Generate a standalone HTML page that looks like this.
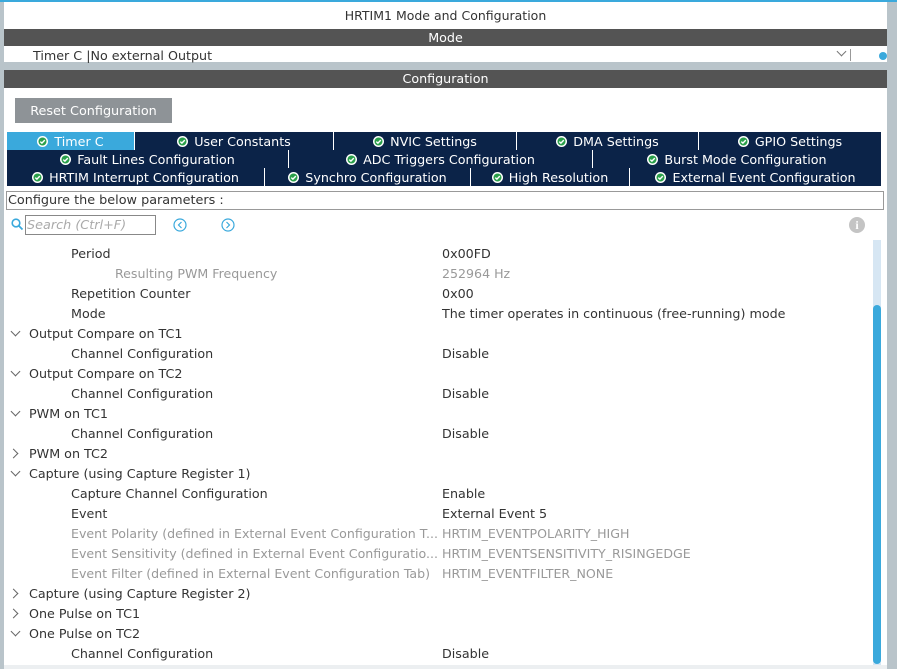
<!DOCTYPE html>
<html><head><meta charset="utf-8"><style>
*{margin:0;padding:0;box-sizing:border-box}
body{width:897px;height:669px;overflow:hidden;background:#b9c4ca;font-family:"DejaVu Sans","Liberation Sans",sans-serif;font-size:12.7px;color:#333;position:relative}
.a{position:absolute;white-space:nowrap}
.hdr{background:#545454;color:#fff;text-align:center;line-height:17px;font-size:12.7px}
.tab{position:absolute;height:18px;background:#0b2348;color:#fff;text-align:center;line-height:20px;border-right:1px solid #fff;font-size:12.7px}
.tab.sel{background:#3aa9dc}
.ck{display:inline-block;width:11px;height:11px;vertical-align:-1px;margin-right:6px}
.r{position:absolute;white-space:nowrap;line-height:20px;height:20px}
.g{color:#999;font-size:12.6px}
.arr{position:absolute;left:12px;width:7px;height:7px;border-right:1px solid #666;border-bottom:1px solid #666}
</style></head><body>
<svg width="0" height="0" style="position:absolute"><defs><symbol id="c" viewBox="0 0 11 11"><circle cx="5.5" cy="5.5" r="5.5" fill="#fff"/><circle cx="5.5" cy="5.5" r="4" fill="#2aa04a"/><path d="M3.3 5.6 L4.9 7.1 L7.8 4.1" fill="none" stroke="#fff" stroke-width="1.4"/></symbol></defs></svg>
<div class="a" style="left:0;top:0;width:897px;height:2px;background:#3aa9dc"></div>
<div class="a" style="left:4px;top:2px;width:883px;height:60px;background:#fff"></div>
<div class="a" style="left:4px;top:7px;width:883px;text-align:center;line-height:17px;font-size:12.5px">HRTIM1 Mode and Configuration</div>
<div class="a hdr" style="left:4px;top:29px;width:883px">Mode</div>
<div class="a" style="left:33px;top:47px;line-height:17px">Timer C |No external Output</div>
<div class="a" style="left:838px;top:48px;width:7px;height:7px;border-right:1px solid #777;border-bottom:1px solid #777;transform:rotate(45deg)"></div>
<div class="a" style="left:850px;top:49px;width:1px;height:12px;background:#999"></div>
<div class="a" style="left:879px;top:52px;width:8px;height:8px;border-radius:50%;background:#3aa9dc"></div>
<div class="a" style="left:4px;top:70px;width:883px;height:599px;background:#fff"></div>
<div class="a hdr" style="left:4px;top:70px;width:883px;top:70px;line-height:18px">Configuration</div>
<div class="a" style="left:15px;top:98px;width:157px;height:25px;background:#8e9397;color:#fff;text-align:center;line-height:27px;font-size:12.8px">Reset Configuration</div>

<div class="tab sel" style="left:7px;top:132px;width:128px"><svg class="ck"><use href="#c"/></svg>Timer C</div>
<div class="tab" style="left:135px;top:132px;width:199px"><svg class="ck"><use href="#c"/></svg>User Constants</div>
<div class="tab" style="left:334px;top:132px;width:183px"><svg class="ck"><use href="#c"/></svg>NVIC Settings</div>
<div class="tab" style="left:517px;top:132px;width:182px"><svg class="ck"><use href="#c"/></svg>DMA Settings</div>
<div class="tab" style="left:699px;top:132px;width:182px;border-right:0"><svg class="ck"><use href="#c"/></svg>GPIO Settings</div>
<div class="tab" style="left:7px;top:150px;width:282px"><svg class="ck"><use href="#c"/></svg>Fault Lines Configuration</div>
<div class="tab" style="left:289px;top:150px;width:304px"><svg class="ck"><use href="#c"/></svg>ADC Triggers Configuration</div>
<div class="tab" style="left:593px;top:150px;width:288px;border-right:0"><svg class="ck"><use href="#c"/></svg>Burst Mode Configuration</div>
<div class="tab" style="left:7px;top:168px;width:258px"><svg class="ck"><use href="#c"/></svg>HRTIM Interrupt Configuration</div>
<div class="tab" style="left:265px;top:168px;width:206px"><svg class="ck"><use href="#c"/></svg>Synchro Configuration</div>
<div class="tab" style="left:471px;top:168px;width:159px"><svg class="ck"><use href="#c"/></svg>High Resolution</div>
<div class="tab" style="left:630px;top:168px;width:251px;border-right:0"><svg class="ck"><use href="#c"/></svg>External Event Configuration</div>

<div class="a" style="left:6px;top:191px;width:878px;height:19px;border:1px solid #999;line-height:18px;padding-left:1px;font-size:12.8px">Configure the below parameters :</div>
<svg class="a" style="left:11px;top:218px" width="13" height="13"><circle cx="5" cy="5" r="3.8" fill="none" stroke="#3aa9dc" stroke-width="1.6"/><line x1="8" y1="8" x2="11.5" y2="11.5" stroke="#3aa9dc" stroke-width="1.8"/></svg>
<div class="a" style="left:25px;top:215px;width:131px;height:20px;border:1px solid #888;color:#aaa;font-style:italic;line-height:19px;padding-left:1px;font-size:12.8px">Search (Ctrl+F)</div>
<svg class="a" style="left:173px;top:218px" width="14" height="14"><circle cx="7" cy="7" r="6" fill="none" stroke="#3aa9dc" stroke-width="1.2"/><path d="M8.5 4 L5.5 7 L8.5 10" fill="none" stroke="#3aa9dc" stroke-width="1.2"/></svg>
<svg class="a" style="left:221px;top:218px" width="14" height="14"><circle cx="7" cy="7" r="6" fill="none" stroke="#3aa9dc" stroke-width="1.2"/><path d="M5.5 4 L8.5 7 L5.5 10" fill="none" stroke="#3aa9dc" stroke-width="1.2"/></svg>
<div class="a" style="left:849px;top:217px;width:16px;height:16px;border-radius:50%;background:#c4c4c4;color:#fff;text-align:center;font-weight:bold;font-size:12px;line-height:16px;font-family:'Liberation Serif',serif">i</div>

<div class="a" style="left:873px;top:240px;width:8px;height:425px;background:#d6e6f3"></div>
<div class="a" style="left:873px;top:305px;width:8px;height:359px;background:#3aa9dc;border-radius:4px"></div>
<div class="a" style="left:4px;top:665px;width:883px;height:4px;background:#eceff1"></div>

<div class="r" style="left:71px;top:244px">Period</div><div class="r" style="left:442px;top:244px">0x00FD</div>
<div class="r g" style="left:115px;top:264px">Resulting PWM Frequency</div><div class="r g" style="left:442px;top:264px">252964 Hz</div>
<div class="r" style="left:71px;top:284px">Repetition Counter</div><div class="r" style="left:442px;top:284px">0x00</div>
<div class="r" style="left:71px;top:304px">Mode</div><div class="r" style="left:442px;top:304px">The timer operates in continuous (free-running) mode</div>
<div class="arr" style="top:328px;transform:rotate(45deg)"></div><div class="r" style="left:29px;top:324px">Output Compare on TC1</div>
<div class="r" style="left:71px;top:344px">Channel Configuration</div><div class="r" style="left:442px;top:344px">Disable</div>
<div class="arr" style="top:368px;transform:rotate(45deg)"></div><div class="r" style="left:29px;top:364px">Output Compare on TC2</div>
<div class="r" style="left:71px;top:384px">Channel Configuration</div><div class="r" style="left:442px;top:384px">Disable</div>
<div class="arr" style="top:408px;transform:rotate(45deg)"></div><div class="r" style="left:29px;top:404px">PWM on TC1</div>
<div class="r" style="left:71px;top:424px">Channel Configuration</div><div class="r" style="left:442px;top:424px">Disable</div>
<div class="arr" style="top:450px;left:10px;transform:rotate(-45deg)"></div><div class="r" style="left:29px;top:444px">PWM on TC2</div>
<div class="arr" style="top:468px;transform:rotate(45deg)"></div><div class="r" style="left:29px;top:464px">Capture (using Capture Register 1)</div>
<div class="r" style="left:71px;top:484px">Capture Channel Configuration</div><div class="r" style="left:442px;top:484px">Enable</div>
<div class="r" style="left:71px;top:504px">Event</div><div class="r" style="left:442px;top:504px">External Event 5</div>
<div class="r g" style="left:71px;top:524px">Event Polarity (defined in External Event Configuration T...</div><div class="r g" style="left:442px;top:524px">HRTIM_EVENTPOLARITY_HIGH</div>
<div class="r g" style="left:71px;top:544px">Event Sensitivity (defined in External Event Configuratio...</div><div class="r g" style="left:442px;top:544px">HRTIM_EVENTSENSITIVITY_RISINGEDGE</div>
<div class="r g" style="left:71px;top:564px">Event Filter (defined in External Event Configuration Tab)</div><div class="r g" style="left:442px;top:564px">HRTIM_EVENTFILTER_NONE</div>
<div class="arr" style="top:590px;left:10px;transform:rotate(-45deg)"></div><div class="r" style="left:29px;top:584px">Capture (using Capture Register 2)</div>
<div class="arr" style="top:610px;left:10px;transform:rotate(-45deg)"></div><div class="r" style="left:29px;top:604px">One Pulse on TC1</div>
<div class="arr" style="top:628px;transform:rotate(45deg)"></div><div class="r" style="left:29px;top:624px">One Pulse on TC2</div>
<div class="r" style="left:71px;top:644px">Channel Configuration</div><div class="r" style="left:442px;top:644px">Disable</div>
</body></html>
